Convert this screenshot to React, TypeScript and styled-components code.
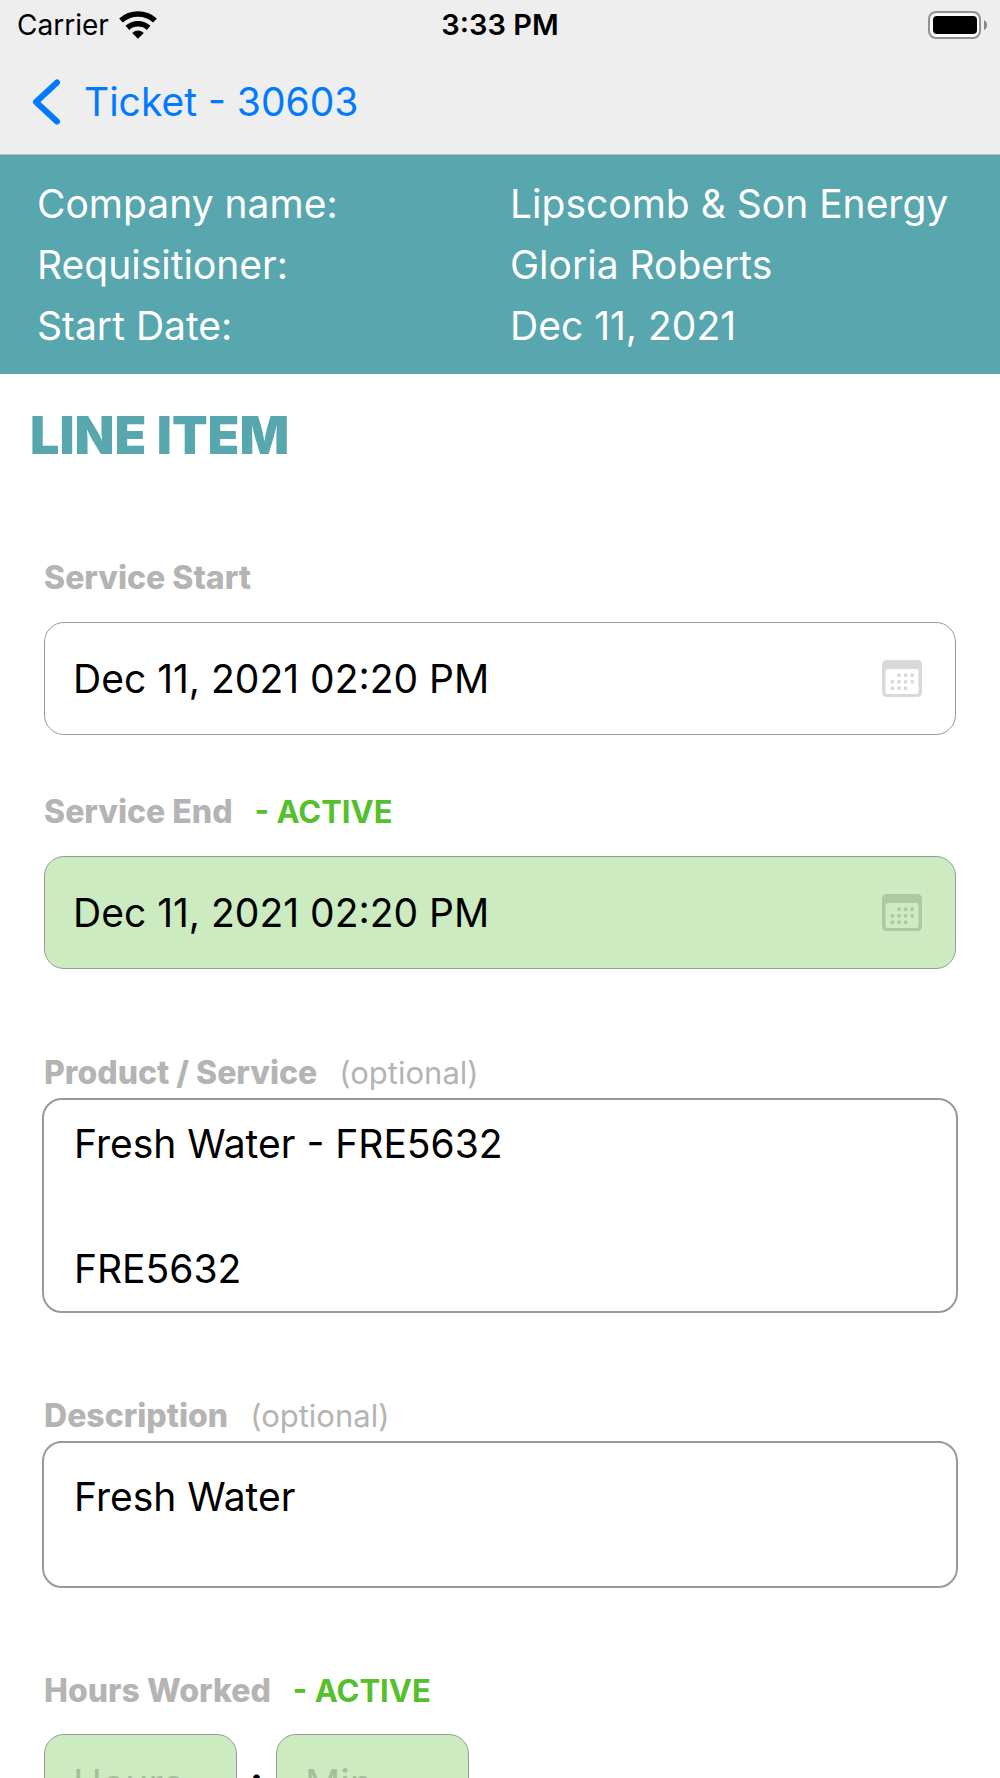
import React from "react";
import styled, { createGlobalStyle } from "styled-components";

const color = {
  teal: "#58a6ae",
  blue: "#007aff",
  bar: "#eeeeee",
  label: "#b4b4b4",
  border: "#999999",
  green: "#55bf2d",
  activeFill: "#ccebc1",
};

const GlobalStyle = createGlobalStyle`
  *, *::before, *::after { box-sizing: border-box; }
  body {
    margin: 0;
    background: #fff;
    color: #000;
    font-family: Inter, "Liberation Sans", sans-serif;
  }
  input, textarea, button { font: inherit; color: inherit; }
`;

const Screen = styled.div`
  display: flex;
  flex-direction: column;
  height: 100vh;
  overflow: hidden;
`;

const StatusBar = styled.header`
  display: grid;
  grid-template-columns: 1fr auto 1fr;
  align-items: center;
  flex: none;
  height: 50px;
  padding: 0 13px;
  background: ${color.bar};
  font-size: 28px;
  line-height: 50px;
`;

const Carrier = styled.div`
  display: flex;
  align-items: center;
  gap: 10px;
  padding-left: 4px;
`;

const Clock = styled.time`
  font-size: 29px;
  font-weight: 600;
`;

const BatterySlot = styled.div`
  display: flex;
  justify-content: flex-end;
`;

const NavBar = styled.nav`
  display: flex;
  align-items: center;
  flex: none;
  height: 105px;
  padding: 0 32px;
  border-bottom: 1px solid #b9bcbd;
  background: ${color.bar};
`;

const BackLink = styled.a`
  display: flex;
  align-items: center;
  gap: 22px;
  height: 104px;
  color: ${color.blue};
  font-size: 39px;
  line-height: 48px;
  text-decoration: none;
`;

const Summary = styled.dl`
  display: grid;
  grid-template-columns: 473px 1fr;
  flex: none;
  margin: 0;
  padding: 18px 37px;
  background: ${color.teal};
  color: #fff;
  font-size: 39px;
  line-height: 61px;
`;

const Term = styled.dt`
  margin: 0;
`;

const Detail = styled.dd`
  margin: 0;
  white-space: nowrap;
`;

const Content = styled.main`
  flex: 1;
  min-height: 0;
  overflow-y: auto;
  scrollbar-width: none;
`;

const Heading = styled.h1`
  margin: 0;
  padding: 30px 30px 0;
  color: ${color.teal};
  font-size: 52px;
  font-weight: 900;
  line-height: 64px;
`;

const Form = styled.form`
  display: flex;
  flex-direction: column;
  padding: 88px 42px 60px;
`;

const Field = styled.div<{ $after: number; $gap: number }>`
  display: flex;
  flex-direction: column;
  gap: ${(p) => p.$gap}px;
  margin-bottom: ${(p) => p.$after}px;
`;

const LabelRow = styled.div`
  display: flex;
  align-items: baseline;
  gap: 22px;
  height: 44px;
  padding-left: 2px;
  color: ${color.label};
  font-size: 31px;
  line-height: 44px;
`;

const Label = styled.label`
  font-size: 32px;
  font-weight: 800;
`;

const Active = styled.span`
  color: ${color.green};
  font-weight: 700;
`;

const DateBox = styled.div<{ $active?: boolean }>`
  display: flex;
  align-items: center;
  height: 113px;
  margin: 0 2px;
  padding: 0 33px 0 28px;
  border: 1px solid ${color.border};
  border-radius: 20px;
  background: ${(p) => (p.$active ? color.activeFill : "#fff")};
`;

const TextInput = styled.input`
  flex: 1;
  min-width: 0;
  padding: 0;
  border: 0;
  outline: 0;
  background: transparent;
  font-size: 39px;
  line-height: 48px;
`;

const CalendarButton = styled.button`
  display: flex;
  padding: 0;
  border: 0;
  background: none;
`;

const ProductBox = styled.div`
  display: flex;
  flex-direction: column;
  justify-content: space-between;
  height: 215px;
  padding: 20px 30px 18px;
  border: 2px solid ${color.border};
  border-radius: 20px;

  ${TextInput} { flex: none; }
`;

const DescriptionArea = styled.textarea`
  display: block;
  width: 100%;
  height: 147px;
  padding: 30px 30px;
  border: 2px solid ${color.border};
  border-radius: 20px;
  outline: 0;
  background: #fff;
  font-size: 39px;
  line-height: 48px;
  resize: none;
`;

const TimeRow = styled.div`
  display: flex;
  align-items: center;
  gap: 12px;
  margin: 0 2px;
  font-size: 39px;
  font-weight: 700;
`;

const Colon = styled.span`
  width: 15px;
  padding-bottom: 6px;
  text-align: center;
`;

const TimeInput = styled.input`
  width: 193px;
  height: 98px;
  padding: 0 28px;
  border: 1px solid ${color.border};
  border-radius: 20px;
  outline: 0;
  background: ${color.activeFill};
  font-size: 39px;
  font-weight: 400;

  &::placeholder { color: #a3bf9b; opacity: 1; }
`;

const WifiIcon = () => (
  <svg width="38" height="28" viewBox="0 0 38 28" fill="none" aria-hidden="true">
    <path d="M2 9.5 A25.5 25.5 0 0 1 36 9.5" stroke="#000" strokeWidth="5.6" />
    <path d="M8.4 16.8 A16 16 0 0 1 29.6 16.8" stroke="#000" strokeWidth="5.6" />
    <path d="M13.2 22 Q19 17.2 24.8 22 L19 27.8 Z" fill="#000" />
  </svg>
);

const BatteryIcon = () => (
  <svg width="60" height="28" viewBox="0 0 60 28" aria-hidden="true">
    <rect x="2" y="1" width="51" height="26" rx="7" fill="#fafafa" stroke="#929292" strokeWidth="2" />
    <rect x="6" y="5" width="44" height="18" rx="4" fill="#000" />
    <path d="M57 9 Q60 10.5 60 14 Q60 17.5 57 19 Z" fill="#858585" />
  </svg>
);

const BackIcon = () => (
  <svg width="30" height="46" viewBox="0 0 30 46" fill="none" aria-hidden="true">
    <path d="M25 3.5 L4 23 L25 42.5" stroke={color.blue} strokeWidth="6" strokeLinecap="round" strokeLinejoin="round" />
  </svg>
);

const dots = [
  [17, 15.3], [23.6, 15.3], [30.2, 15.3],
  [10.4, 21.8], [17, 21.8], [23.6, 21.8], [30.2, 21.8],
  [10.4, 28.3], [17, 28.3], [23.6, 28.3],
];

const CalendarIcon = () => (
  <svg width="40" height="37" viewBox="0 0 40 37" fill="#000" fillOpacity="0.15" aria-hidden="true">
    <path
      fillRule="evenodd"
      d="M5 0 H35 Q40 0 40 5 V32 Q40 37 35 37 H5 Q0 37 0 32 V5 Q0 0 5 0 Z M6 9 Q3.5 9 3.5 11.5 V31.5 Q3.5 34 6 34 H34 Q36.5 34 36.5 31.5 V11.5 Q36.5 9 34 9 Z"
    />
    {dots.map(([x, y]) => (
      <rect key={`${x}-${y}`} x={x - 1.7} y={y - 1.7} width="3.4" height="3.4" rx="0.8" />
    ))}
  </svg>
);

const summary = [
  ["Company name:", "Lipscomb & Son Energy"],
  ["Requisitioner:", "Gloria Roberts"],
  ["Start Date:", "Dec 11, 2021"],
];

type DateFieldProps = { id: string; label: string; value: string; active?: boolean; after: number };

const DateField = ({ id, label, value, active, after }: DateFieldProps) => (
  <Field $gap={22} $after={after}>
    <LabelRow>
      <Label htmlFor={id}>{label}</Label>
      {active && <Active>- ACTIVE</Active>}
    </LabelRow>
    <DateBox $active={active}>
      <TextInput id={id} type="text" defaultValue={value} />
      <CalendarButton type="button" aria-label={`Choose ${label}`}>
        <CalendarIcon />
      </CalendarButton>
    </DateBox>
  </Field>
);

export default function App() {
  return (
    <Screen>
      <GlobalStyle />
      <StatusBar>
        <Carrier>
          Carrier
          <WifiIcon />
        </Carrier>
        <Clock>3:33 PM</Clock>
        <BatterySlot>
          <BatteryIcon />
        </BatterySlot>
      </StatusBar>
      <NavBar>
        <BackLink href="#ticket">
          <BackIcon />
          Ticket - 30603
        </BackLink>
      </NavBar>
      <Summary>
        {summary.map(([term, detail]) => (
          <React.Fragment key={term}>
            <Term>{term}</Term>
            <Detail>{detail}</Detail>
          </React.Fragment>
        ))}
      </Summary>
      <Content>
        <Heading>LINE ITEM</Heading>
        <Form>
          <DateField id="service-start" label="Service Start" value="Dec 11, 2021 02:20 PM" after={55} />
          <DateField id="service-end" label="Service End" value="Dec 11, 2021 02:20 PM" active after={82} />
          <Field $gap={3} $after={81}>
            <LabelRow>
              <Label htmlFor="product">Product / Service</Label>
              <span>(optional)</span>
            </LabelRow>
            <ProductBox>
              <TextInput id="product" type="text" defaultValue="Fresh Water - FRE5632" />
              <TextInput type="text" aria-label="Product code" defaultValue="FRE5632" />
            </ProductBox>
          </Field>
          <Field $gap={3} $after={81}>
            <LabelRow>
              <Label htmlFor="description">Description</Label>
              <span>(optional)</span>
            </LabelRow>
            <DescriptionArea id="description" defaultValue="Fresh Water" />
          </Field>
          <Field $gap={21} $after={0}>
            <LabelRow>
              <Label htmlFor="hours">Hours Worked</Label>
              <Active>- ACTIVE</Active>
            </LabelRow>
            <TimeRow>
              <TimeInput id="hours" type="text" placeholder="Hours" />
              <Colon>:</Colon>
              <TimeInput type="text" aria-label="Minutes worked" placeholder="Min" />
            </TimeRow>
          </Field>
        </Form>
      </Content>
    </Screen>
  );
}
